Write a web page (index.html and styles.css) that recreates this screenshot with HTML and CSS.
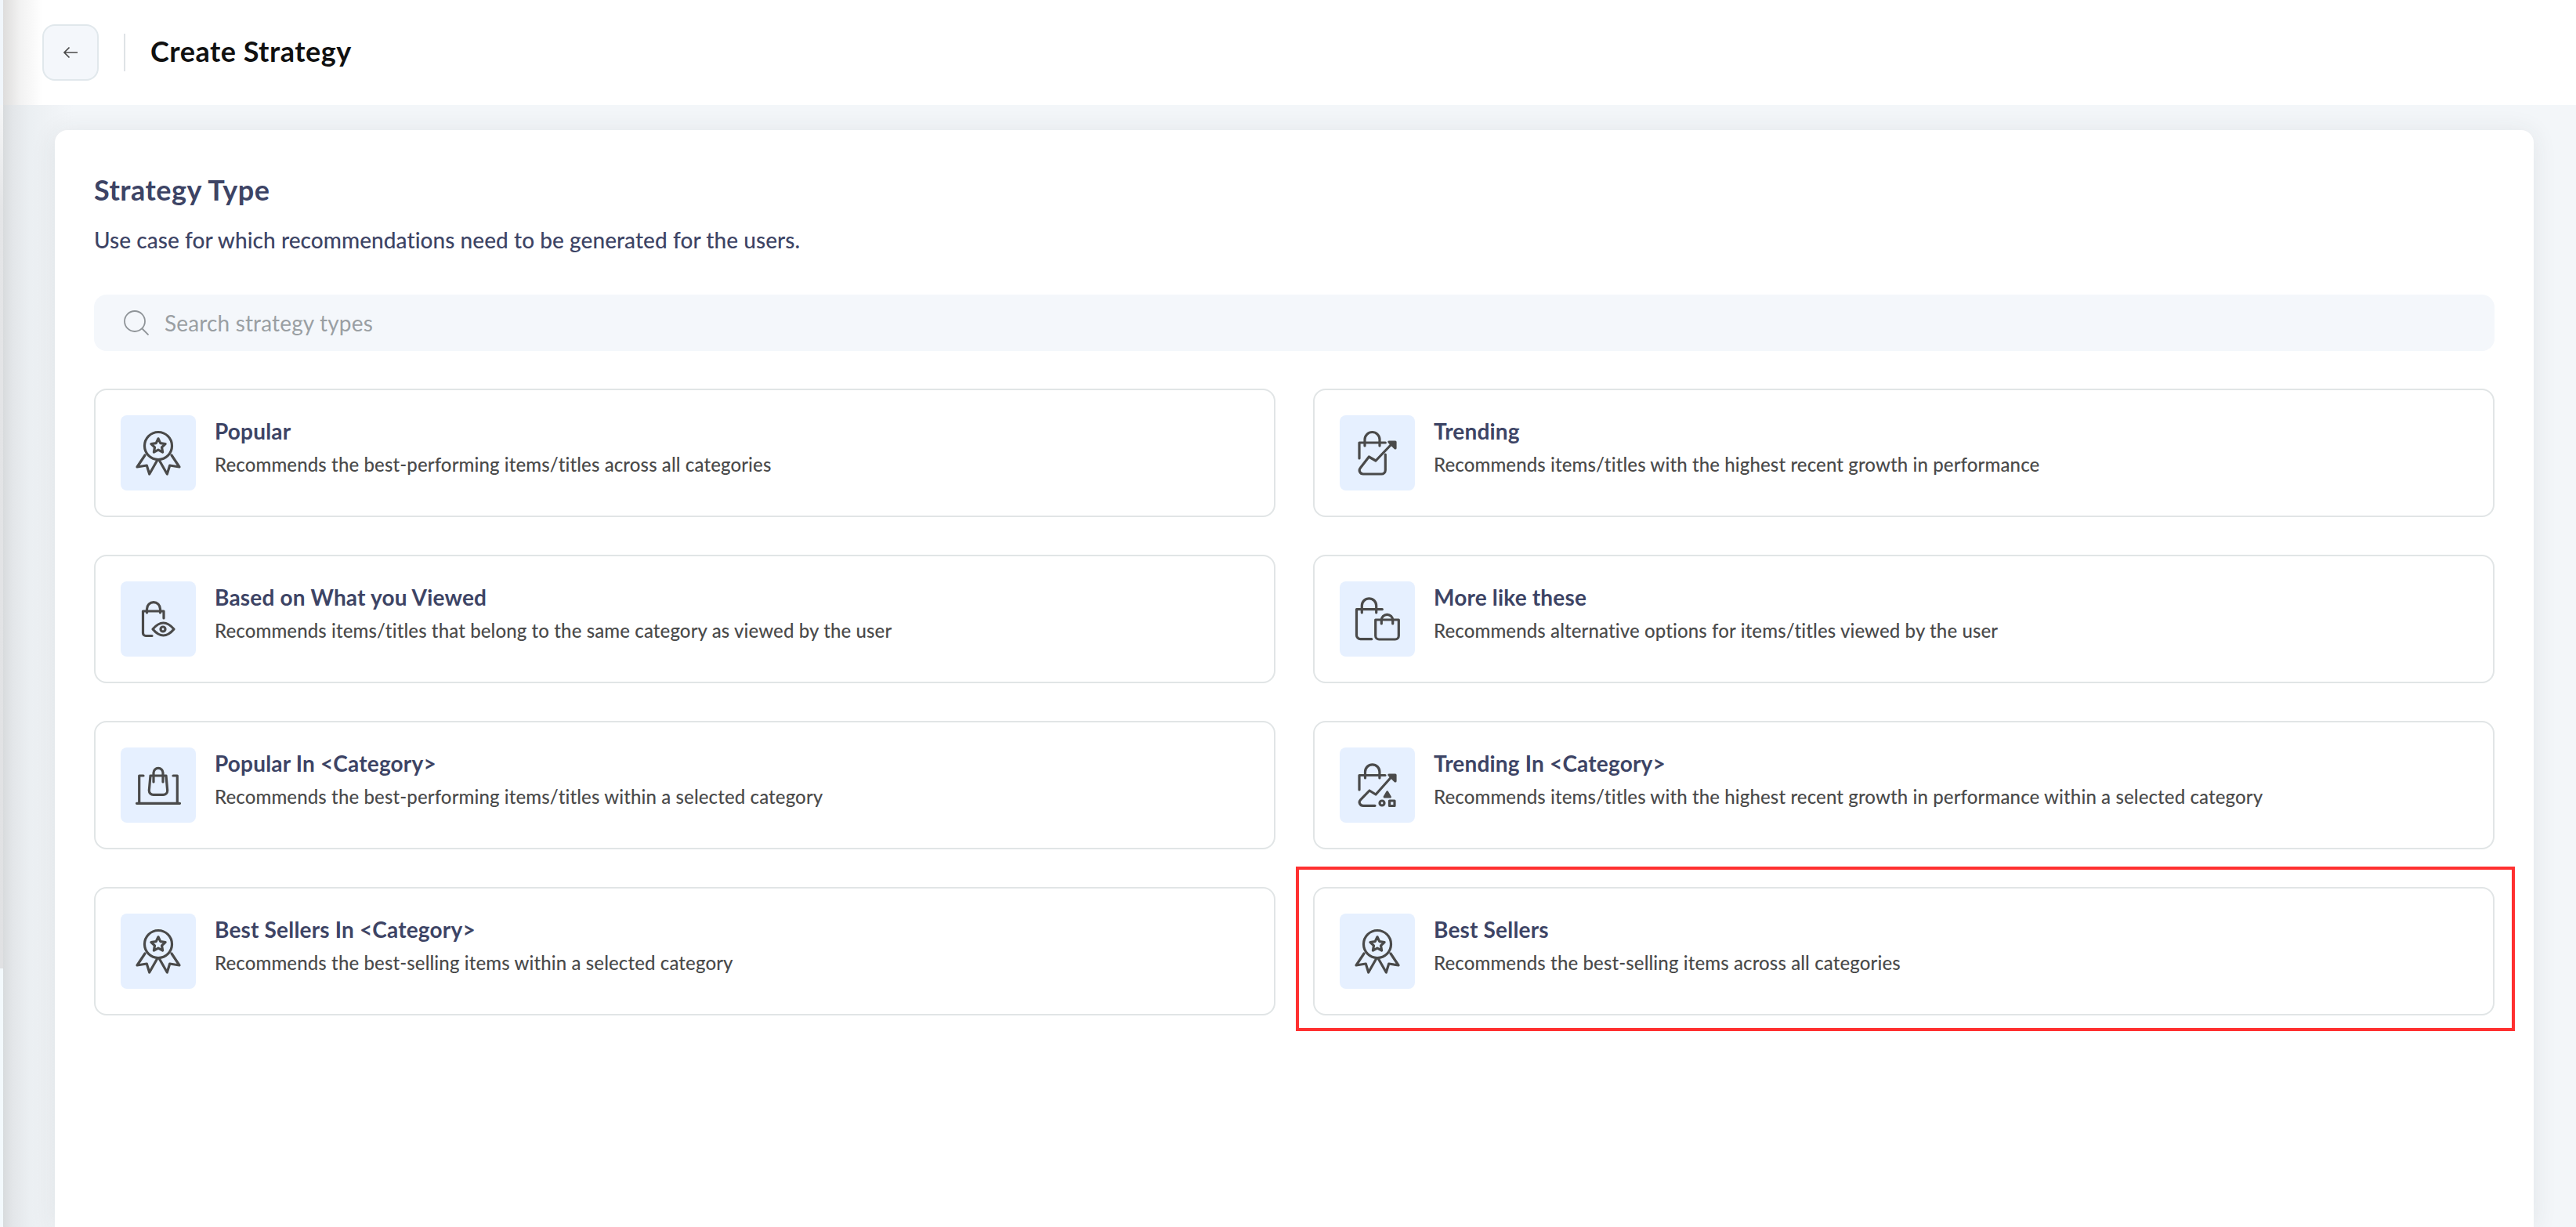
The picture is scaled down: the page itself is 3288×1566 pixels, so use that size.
FILE: index.html
```html
<!DOCTYPE html>
<html lang="en">
<head>
<meta charset="utf-8">
<title>Create Strategy</title>
<link rel="stylesheet" href="styles.css">
</head>
<body>
<svg class="defs" width="0" height="0" aria-hidden="true">
  <symbol id="medal" class="medal" viewBox="0 0 56 56">
    <circle cx="28" cy="19" r="17.500"/>
    <path d="M28 9.800l2.800 5.800 6.300.9-4.600 4.400 1.100 6.200-5.600-3-5.600 3 1.100-6.200-4.600-4.400 6.300-.9z"/>
    <path d="M11 31L1 46l12.300-2 3.400 11 10-17.500"/>
    <path d="M45 31l10 15-12.300-2-3.400 11-10-17.500"/>
  </symbol>
</svg>
<div class="app">
  <div class="rail"><div class="rail-top"></div><div class="rail-mid"></div><div class="rail-bottom"></div></div>
  <main class="main">
    <header class="topbar">
      <button class="back" aria-label="Back">
        <svg class="back-icon" viewBox="0 0 24 24"><path d="M21 12H4M10.500 5.500L4 12l6.500 6.500"/></svg>
      </button>
      <span class="divider"></span>
      <h1 class="page-title">Create Strategy</h1>
    </header>
    <div class="content">
      <section class="panel">
        <h2 class="panel-title">Strategy Type</h2>
        <p class="panel-sub">Use case for which recommendations need to be generated for the users.</p>
        <div class="search">
          <svg class="search-icon" viewBox="0 0 32 32"><circle cx="14" cy="14" r="13"/><path d="M23.500 23.500L31.500 31.500"/></svg>
          <span class="search-text">Search strategy types</span>
        </div>
        <div class="grid">
          <article class="item">
            <div class="thumb"><svg class="ico" viewBox="0 0 56 56"><use href="#medal"/></svg></div>
            <div class="item-text"><h3 class="item-title">Popular</h3><p class="item-desc">Recommends the best-performing items/titles across all categories</p></div>
          </article>
          <article class="item">
            <div class="thumb"><svg class="ico" viewBox="0 0 56 56">
              <path d="M12 19v-8a9.500 9.500 0 0 1 19 0v8"/>
              <path d="M5 35V15h33.300"/>
              <path d="M38.300 30v20a5 5 0 0 1-5 5H10c-4 0-6.500-4.500-3.500-8L17.300 33l8.700 5L46.500 16.500"/>
              <path class="solid" d="M43 14h8v8z"/>
            </svg></div>
            <div class="item-text"><h3 class="item-title">Trending</h3><p class="item-desc">Recommends items/titles with the highest recent growth in performance</p></div>
          </article>
          <article class="item">
            <div class="thumb"><svg class="ico" viewBox="0 0 56 56">
              <path d="M13.500 20v-4.800a8.500 8.500 0 0 1 17 0v4.800"/>
              <path d="M35 27v-9H8.500v28a3.500 3.500 0 0 0 3.500 3.500h8"/>
              <path d="M21 41q13.500-16 27 0q-13.500 16-27 0z"/>
              <circle cx="34" cy="41" r="3"/>
            </svg></div>
            <div class="item-text"><h3 class="item-title">Based on What you Viewed</h3><p class="item-desc">Recommends items/titles that belong to the same category as viewed by the user</p></div>
          </article>
          <article class="item">
            <div class="thumb"><svg class="ico" viewBox="0 0 56 56">
              <path d="M8.300 20v-9a9.200 9.200 0 0 1 18.400 0v9"/>
              <path d="M34.300 15.700H1.500v33a5 5 0 0 0 5 5h14.200"/>
              <path d="M25.700 29h29.600v20.500a4.500 4.500 0 0 1-4.500 4.500H30.200a4.500 4.500 0 0 1-4.500-4.500z"/>
              <path d="M33.300 34v-4.500a7.200 7.200 0 0 1 14.400 0v4.500"/>
            </svg></div>
            <div class="item-text"><h3 class="item-title">More like these</h3><p class="item-desc">Recommends alternative options for items/titles viewed by the user</p></div>
          </article>
          <article class="item">
            <div class="thumb"><svg class="ico" viewBox="0 0 56 56">
              <path d="M9 16H3.700V51.300M47 16h5.300V51.300M0.500 51.300h55"/>
              <path d="M18 16h20l1.700 19a5.400 5.400 0 0 1-5.400 5.400H21.700a5.400 5.400 0 0 1-5.400-5.400z"/>
              <path d="M22 24V12.300a6 6 0 0 1 12 0V24"/>
            </svg></div>
            <div class="item-text"><h3 class="item-title">Popular In &lt;Category&gt;</h3><p class="item-desc">Recommends the best-performing items/titles within a selected category</p></div>
          </article>
          <article class="item">
            <div class="thumb"><svg class="ico" viewBox="0 0 56 56">
              <path d="M12.500 19v-8a9.200 9.200 0 0 1 18.400 0v8"/>
              <path d="M5 34V15.500h33"/>
              <path d="M25 54.300H10c-4 0-6.500-4.500-3.500-7.500L18 35l8 5L46.500 17"/>
              <path class="solid" d="M43 15h8v8z"/>
              <path class="solid" d="M40.700 37l3.500 6h-7z"/>
              <circle cx="34" cy="51" r="3"/>
              <rect x="43.500" y="48" width="6.500" height="6.500"/>
            </svg></div>
            <div class="item-text"><h3 class="item-title">Trending In &lt;Category&gt;</h3><p class="item-desc">Recommends items/titles with the highest recent growth in performance within a selected category</p></div>
          </article>
          <article class="item">
            <div class="thumb"><svg class="ico" viewBox="0 0 56 56"><use href="#medal"/></svg></div>
            <div class="item-text"><h3 class="item-title">Best Sellers In &lt;Category&gt;</h3><p class="item-desc">Recommends the best-selling items within a selected category</p></div>
          </article>
          <article class="item marked">
            <div class="thumb"><svg class="ico" viewBox="0 0 56 56"><use href="#medal"/></svg></div>
            <div class="item-text"><h3 class="item-title">Best Sellers</h3><p class="item-desc">Recommends the best-selling items across all categories</p></div>
          </article>
        </div>
      </section>
    </div>
  </main>
</div>
</body>
</html>
```
FILE: styles.css
```css
* { box-sizing: border-box; }
html, body { margin: 0; height: 100%; }
body {
  font-family: "Lato", "Liberation Sans", sans-serif;
  background: #fff;
  overflow: hidden;
}
.defs { position: absolute; }
.medal { overflow: visible; }
.app { display: flex; height: 1566px; }
.rail { width: 4px; display: flex; flex-direction: column; flex: none; }
.rail-top { height: 134px; background: #f1f6fb; }
.rail-mid { height: 1102px; background: linear-gradient(180deg, #f5f6f7 0, #e4e5e7 12%, #e0e1e3 100%); }
.rail-bottom { flex: 1; background: #f3f9fc; }
.main { flex: 1; display: flex; flex-direction: column; min-width: 0; }
.topbar {
  height: 134px;
  flex: none;
  display: flex;
  align-items: center;
  padding-left: 50px;
  background: linear-gradient(90deg, #dedddc 0, #f2f2f2 22px, #fff 50px);
}
.back {
  width: 72px;
  height: 72px;
  padding: 0;
  border: 2px solid #e1e8ec;
  border-radius: 16px;
  background: #f4f7fb;
  display: flex;
  align-items: center;
  justify-content: center;
}
.back-icon { width: 24px; height: 24px; fill: none; stroke: #4a4a4a; stroke-width: 1.700; }
.divider { width: 2px; height: 48px; margin: 0 32px; background: #dfe3e6; }
.page-title { margin: -4px 0 0; font-size: 36px; line-height: 44px; font-weight: 700; letter-spacing: .5px; color: #111; }
.content {
  flex: 1;
  min-height: 0;
  display: flex;
  padding: 32px 54px 0 66px;
  background: linear-gradient(90deg, #d8dbdd 0, #e3e6e9 12px, #ebeff2 34px, #f0f3f6 66px, #f3f6f9 90px) #f3f6f9;
}
.panel {
  flex: 1;
  min-width: 0;
  padding: 54px 50px 0;
  background: #fff;
  border-radius: 16px 16px 0 0;
  box-shadow: 0 2px 32px rgba(40, 50, 60, .09);
}
.panel-title { margin: 0; font-size: 36px; line-height: 44px; font-weight: 700; letter-spacing: .5px; color: #3d4465; }
.panel-sub { margin: 24px 0 0; font-size: 28px; line-height: 36px; font-weight: 500; letter-spacing: .06px; color: #3d4465; }
.search {
  margin-top: 52px;
  height: 72px;
  display: flex;
  align-items: center;
  gap: 20px;
  padding-left: 38px;
  border-radius: 16px;
  background: #f4f7fb;
}
.search-icon { width: 32px; height: 32px; fill: none; stroke: #8f9498; stroke-width: 1.800; }
.search-text { font-size: 28px; letter-spacing: .15px; color: #9a9fa3; }
.grid { margin-top: 48px; display: grid; grid-template-columns: 1fr 1fr; gap: 48px; }
.item {
  position: relative;
  height: 164px;
  display: flex;
  gap: 24px;
  padding: 32px;
  border: 2px solid #e1e5e6;
  border-radius: 16px;
  background: #fff;
}
.marked::after {
  content: "";
  position: absolute;
  top: -28px;
  left: -24px;
  right: -28px;
  bottom: -22px;
  border: 4px solid #ff3030;
  pointer-events: none;
}
.thumb {
  width: 96px;
  height: 96px;
  flex: none;
  display: flex;
  align-items: center;
  justify-content: center;
  border-radius: 8px;
  background: #e6f0ff;
}
.ico {
  width: 56px;
  height: 56px;
  overflow: visible;
  fill: none;
  stroke: #4a4a4a;
  stroke-width: 3.200;
  stroke-linecap: round;
  stroke-linejoin: round;
}
.ico .solid { fill: #4a4a4a; }
.item-text { min-width: 0; padding-top: 2px; }
.item-title { margin: 0; font-size: 28px; line-height: 36px; font-weight: 700; letter-spacing: .18px; color: #3d4465; }
.item-desc { margin: 9px 0 0; font-size: 24px; line-height: 32px; font-weight: 500; letter-spacing: .12px; color: #4a4a4a; }
```
